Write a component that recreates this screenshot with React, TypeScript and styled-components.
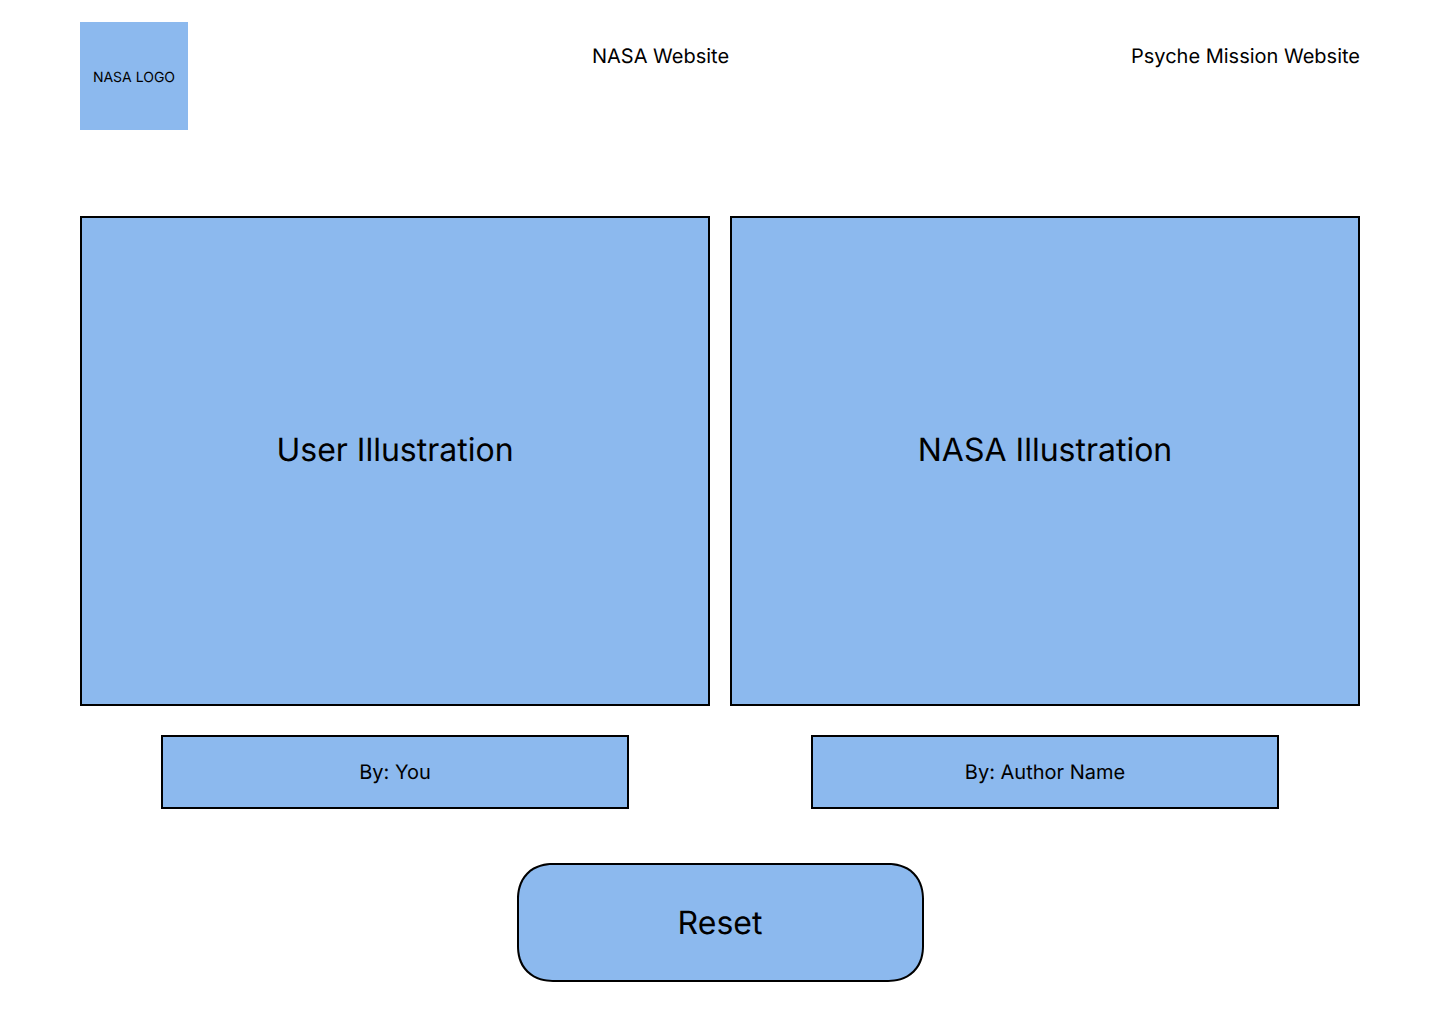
import React from "react";
import styled, { createGlobalStyle } from "styled-components";

const GlobalStyle = createGlobalStyle`
  *, *::before, *::after { box-sizing: border-box; }
  body {
    margin: 0;
    background: #ffffff;
    color: #000000;
    font-family: Inter, "Liberation Sans", sans-serif;
    text-rendering: geometricPrecision;
  }
`;

const Page = styled.div`
  padding: 22px 80px 42px;
`;

const Header = styled.header`
  display: flex;
  align-items: flex-start;
  gap: 404px;

  @media (max-width: 1100px) {
    gap: 40px;
  }
`;

const Logo = styled.div`
  display: flex;
  align-items: center;
  justify-content: center;
  width: 108px;
  height: 108px;
  padding-top: 4px;
  background: #8cb9ee;
  font-size: 14px;
  line-height: 20px;
`;

const Nav = styled.nav`
  display: flex;
  flex: 1;
  justify-content: space-between;
  padding-top: 22px;
`;

const NavLink = styled.a`
  color: inherit;
  text-decoration: none;
  font-size: 20px;
  line-height: 24px;
`;

const Comparison = styled.main`
  display: grid;
  grid-template-columns: 1fr 1fr;
  gap: 20px;
  margin-top: 86px;
`;

const Figure = styled.figure`
  display: flex;
  flex-direction: column;
  align-items: center;
  gap: 29px;
  margin: 0;
`;

const Illustration = styled.div`
  display: flex;
  align-items: center;
  justify-content: center;
  width: 100%;
  height: 490px;
  padding-bottom: 22px;
  border: 2px solid #000000;
  background: #8cb9ee;
  font-size: 32px;
  line-height: 40px;
`;

const Credit = styled.figcaption`
  display: flex;
  align-items: center;
  justify-content: center;
  width: 468px;
  max-width: 100%;
  height: 74px;
  border: 2px solid #000000;
  background: #8cb9ee;
  font-size: 20px;
  line-height: 24px;
`;

const ResetButton = styled.button`
  display: block;
  width: 407px;
  height: 119px;
  margin: 54px auto 0;
  border: 2px solid #000000;
  border-radius: 36px;
  corner-shape: superellipse(1.15);
  background: #8cb9ee;
  color: inherit;
  font: inherit;
  font-size: 32px;
  line-height: 40px;
  text-rendering: inherit;
  cursor: pointer;
`;

const works = [
  { title: "User Illustration", credit: "By: You" },
  { title: "NASA Illustration", credit: "By: Author Name" },
];

export default function App() {
  return (
    <Page>
      <GlobalStyle />
      <Header>
        <Logo>NASA LOGO</Logo>
        <Nav>
          <NavLink href="#nasa">NASA Website</NavLink>
          <NavLink href="#psyche">Psyche Mission Website</NavLink>
        </Nav>
      </Header>
      <Comparison>
        {works.map((work) => (
          <Figure key={work.title}>
            <Illustration>{work.title}</Illustration>
            <Credit>{work.credit}</Credit>
          </Figure>
        ))}
      </Comparison>
      <ResetButton type="button">Reset</ResetButton>
    </Page>
  );
}
